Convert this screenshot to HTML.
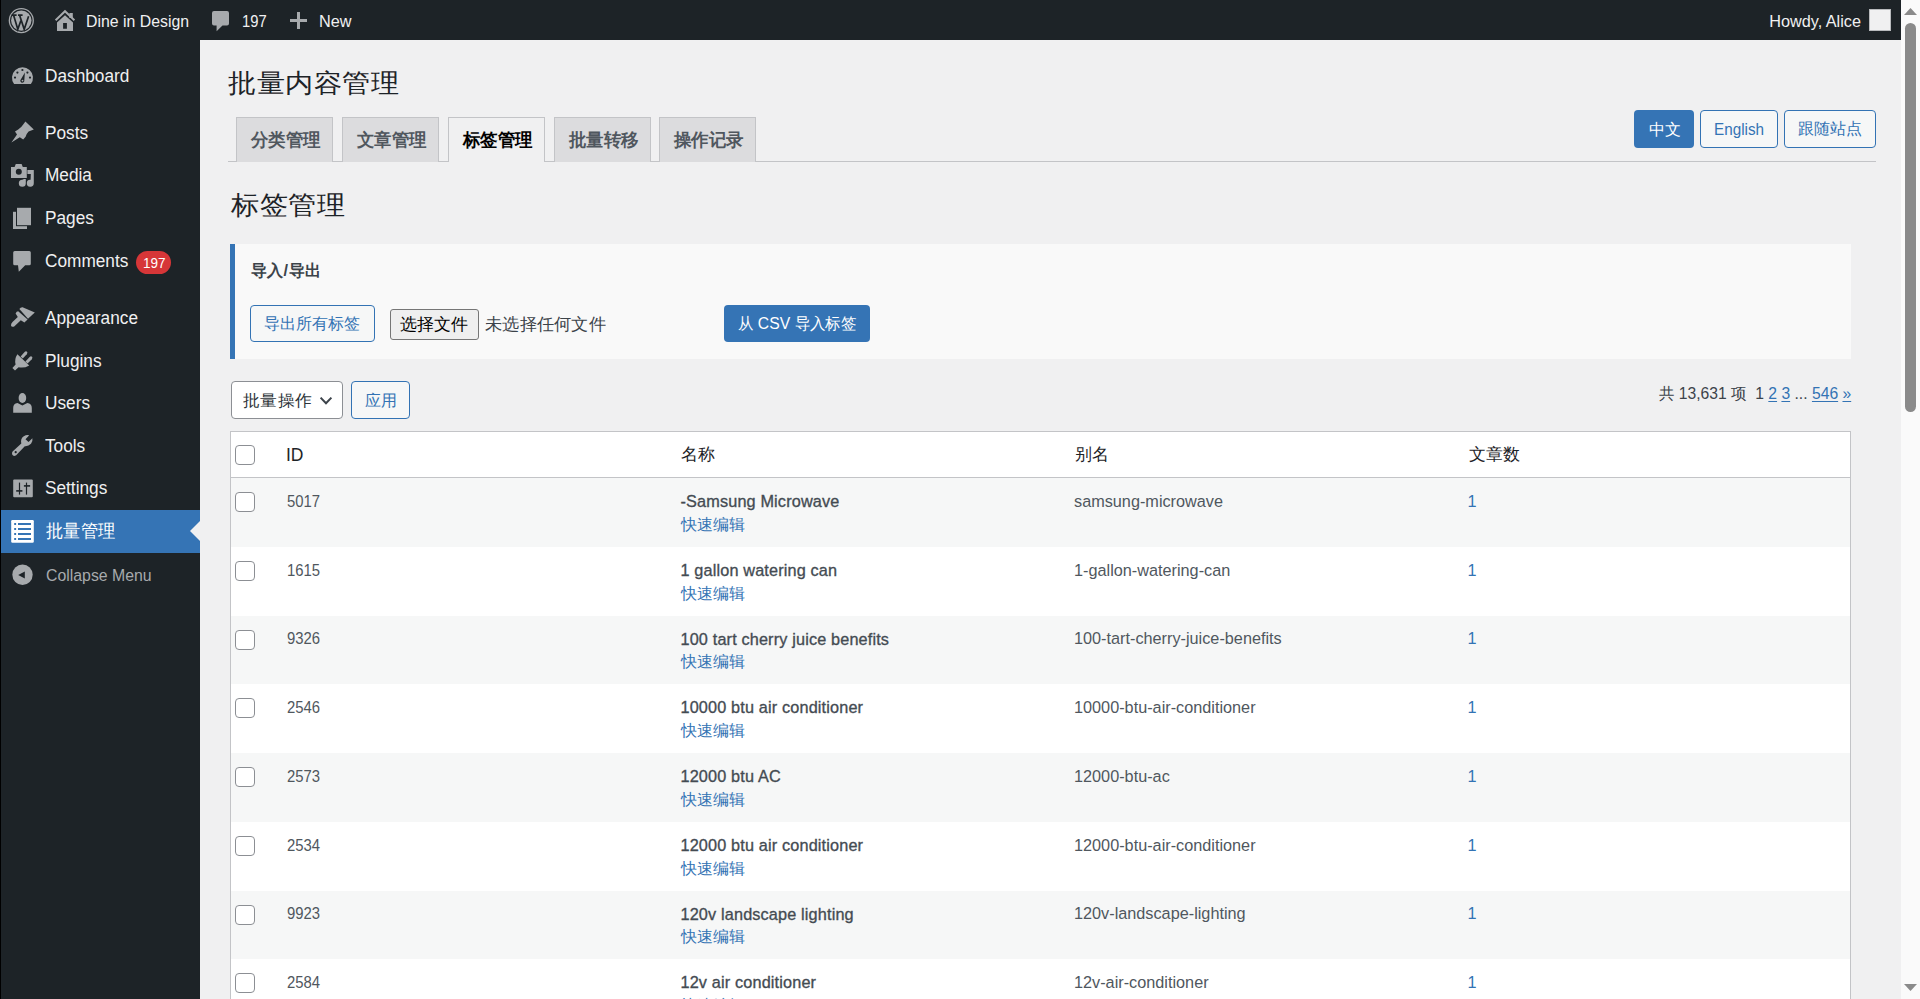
<!DOCTYPE html>
<html><head><meta charset="utf-8"><title>批量内容管理</title>
<style>
html,body{margin:0;padding:0;}
body{width:1920px;height:999px;overflow:hidden;position:relative;background:#f0f0f1;font-family:"Liberation Sans",sans-serif;}
.t{position:absolute;white-space:nowrap;}
.r{position:absolute;box-sizing:border-box;}
svg{position:absolute;overflow:visible;}
u{text-decoration:underline;text-underline-offset:2px;}
</style></head><body>
<div class="r" style="left:0px;top:0px;width:1901px;height:40px;background:#1d2327;"></div>
<div class="r" style="left:0px;top:40px;width:200px;height:959px;background:#1d2327;"></div>
<div class="r" style="left:0px;top:0px;width:1px;height:999px;background:#000;"></div>
<svg style="left:0;top:0" width="40" height="40">
<circle cx="21.3" cy="20.6" r="12.6" fill="#a7aaad"/>
<circle cx="21.3" cy="20.6" r="11.3" fill="#1d2327"/>
<circle cx="21.3" cy="20.6" r="10.2" fill="#a7aaad"/>
<g stroke="#1d2327" stroke-width="1.7" fill="none" stroke-linecap="butt">
<path d="M13.6 15.2 L17.8 29.2 L20.9 20.6"/>
<path d="M19.6 15.2 L24.2 29.2 L28.6 16.2"/>
<path d="M11.8 15.2 L16.6 15.2 M18 15.2 L22.6 15.2"/>
</g>
</svg>
<svg style="left:0;top:0" width="300" height="40"><g fill="#a7aaad">
<path d="M55.6 20.2 L65 11.2 L74.4 20.2" fill="none" stroke="#a7aaad" stroke-width="2"/>
<path d="M57 22.6 L65 15.2 L73 22.6 L73 31 L57 31 Z M63.1 23.1 L63.1 28.8 L66.9 28.8 L66.9 23.1 Z" fill-rule="evenodd"/>
<rect x="69.4" y="13" width="3.4" height="5"/>
<path d="M214 11 L227 11 Q229 11 229 13 L229 23.5 Q229 25.5 227 25.5 L222.5 25.5 L216.6 31.3 L216.6 25.5 L214 25.5 Q212 25.5 212 23.5 L212 13 Q212 11 214 11 Z"/>
</g></svg>
<div class="t " style="left:86px;top:10.81px;font-size:16.25px;line-height:21.12px;color:#f0f0f1;font-weight:400;transform:scale(0.975,1);transform-origin:left center;">Dine in Design</div>
<div class="t " style="left:242px;top:10.81px;font-size:16.25px;line-height:21.12px;color:#f0f0f1;font-weight:400;transform:scale(0.91,1);transform-origin:left center;">197</div>
<div class="r" style="left:297px;top:12px;width:3px;height:17px;background:#a7aaad;"></div>
<div class="r" style="left:290px;top:19px;width:17px;height:3px;background:#a7aaad;"></div>
<div class="t " style="left:319px;top:10.81px;font-size:16.25px;line-height:21.12px;color:#f0f0f1;font-weight:400;">New</div>
<div class="t " style="right:59px;top:10.81px;font-size:16.25px;line-height:21.12px;color:#f0f0f1;font-weight:400;">Howdy, Alice</div>
<div class="r" style="left:1869px;top:9px;width:22px;height:22px;background:#f0f0f1;border:1px solid #b8babd;"></div>
<div class="r" style="left:1901px;top:0px;width:19px;height:999px;background:#fafafa;"></div>
<div class="r" style="left:1905px;top:23px;width:11px;height:389px;background:#8a8a8a;border-radius:5.5px;"></div>
<svg style="left:1901px;top:0" width="19" height="999"><path fill="#8a8a8a" d="M3 15 L16 15 L9.5 8 Z"/><path fill="#8a8a8a" d="M3 984 L16 984 L9.5 991 Z"/></svg>
<div class="t " style="left:45px;top:65.26px;font-size:17.5px;line-height:22.75px;color:#f0f0f1;font-weight:400;transform:scale(0.985,1);transform-origin:left center;">Dashboard</div>
<div class="t " style="left:45px;top:121.76px;font-size:17.5px;line-height:22.75px;color:#f0f0f1;font-weight:400;transform:scale(0.985,1);transform-origin:left center;">Posts</div>
<div class="t " style="left:45px;top:164.26px;font-size:17.5px;line-height:22.75px;color:#f0f0f1;font-weight:400;transform:scale(0.985,1);transform-origin:left center;">Media</div>
<div class="t " style="left:45px;top:207.36px;font-size:17.5px;line-height:22.75px;color:#f0f0f1;font-weight:400;transform:scale(0.985,1);transform-origin:left center;">Pages</div>
<div class="t " style="left:45px;top:250.16px;font-size:17.5px;line-height:22.75px;color:#f0f0f1;font-weight:400;transform:scale(0.985,1);transform-origin:left center;">Comments</div>
<div class="t " style="left:45px;top:307.26px;font-size:17.5px;line-height:22.75px;color:#f0f0f1;font-weight:400;transform:scale(0.985,1);transform-origin:left center;">Appearance</div>
<div class="t " style="left:45px;top:349.76px;font-size:17.5px;line-height:22.75px;color:#f0f0f1;font-weight:400;transform:scale(0.985,1);transform-origin:left center;">Plugins</div>
<div class="t " style="left:45px;top:392.26px;font-size:17.5px;line-height:22.75px;color:#f0f0f1;font-weight:400;transform:scale(0.985,1);transform-origin:left center;">Users</div>
<div class="t " style="left:45px;top:434.76px;font-size:17.5px;line-height:22.75px;color:#f0f0f1;font-weight:400;transform:scale(0.985,1);transform-origin:left center;">Tools</div>
<div class="t " style="left:45px;top:477.26px;font-size:17.5px;line-height:22.75px;color:#f0f0f1;font-weight:400;transform:scale(0.985,1);transform-origin:left center;">Settings</div>
<div class="r" style="left:1px;top:510px;width:199px;height:43px;background:#3574b5;"></div>
<svg style="left:190px;top:521px" width="10" height="20"><path fill="#f0f0f1" d="M10 0 L0 10 L10 20 Z"/></svg>
<div class="t " style="left:45.5px;top:519.86px;font-size:17.5px;line-height:22.75px;color:#fff;font-weight:400;transform:scale(0.96,1);transform-origin:left center;">批量管理</div>
<div class="t " style="left:45.5px;top:564.71px;font-size:16.25px;line-height:21.12px;color:#a7aaad;font-weight:400;transform:scale(0.975,1);transform-origin:left center;">Collapse Menu</div>
<div class="r" style="left:136px;top:251px;width:35px;height:23px;background:#d63638;border-radius:11.5px;"></div>
<div class="t " style="left:143.4px;top:252.65px;font-size:15px;line-height:19.5px;color:#fff;font-weight:400;transform:scale(0.9,1);transform-origin:left center;">197</div>
<svg style="left:0;top:0" width="200" height="600">
<g fill="#a7aaad">
<!-- dashboard -->
<path d="M14.1 84 A10.5 10.5 0 1 1 30.9 84 Z"/>
</g>
<g fill="#1d2327">
<circle cx="22.4" cy="70" r="1.1"/><circle cx="17.4" cy="72.6" r="1.1"/><circle cx="27.4" cy="72.6" r="1.1"/>
<circle cx="15" cy="77.6" r="1.1"/><circle cx="30" cy="77.6" r="1.1"/>
<path d="M24.9 72.6 L24.3 80.6 A2 2 0 1 1 20.8 79.5 Z"/>
</g>
<g fill="#a7aaad"><circle cx="22.5" cy="80.6" r="0.9"/></g>
<g fill="#a7aaad">
<!-- posts pin -->
<path d="M11.4 142.6 L17 134.6 L15 131.4 L18.2 129.4 Q21.5 127.5 23.2 124.6 L25.4 121.4 L33.8 129.4 L28.6 131.4 Q26.5 133.5 25.6 136.8 L23.2 139.6 L19.8 137.2 Z"/>
<!-- media -->
<path d="M11 167 L14.6 167 L15.8 164 L21.6 164 L22.8 167 L26.8 167 L26.8 178 L11 178 Z M18.8 168.8 A3 3 0 1 0 18.8 174.8 A3 3 0 1 0 18.8 168.8 Z" fill-rule="evenodd"/>
<path d="M27.4 170 L33.8 170 L33.8 183.2 A3.5 3.5 0 1 1 30.6 179.7 L30.8 174 L27.4 174 Z"/>
<path d="M24 179 L25.8 179 L25.8 183.2 A3.5 3.5 0 1 1 22.3 179.7 Z"/>
<!-- pages -->
<rect x="13" y="211.8" width="14" height="17.2"/>
<rect x="16" y="206.8" width="16" height="19.4" fill="#1d2327"/>
<rect x="17" y="207.8" width="14" height="17.4"/>
<!-- comments -->
<path d="M14.7 251 L29.3 251 Q30.8 251 30.8 252.5 L30.8 263.7 Q30.8 265.2 29.3 265.2 L25.2 265.2 L18.8 271.8 L18 265.2 L14.7 265.2 Q13.2 265.2 13.2 263.7 L13.2 252.5 Q13.2 251 14.7 251 Z"/>
<!-- appearance brush -->
<path d="M19.4 309 Q20.5 307 22.6 307.2 L34.8 312.4 L28 318.8 Z"/>
<path d="M15.6 313.4 Q16.5 311.3 18.2 311.2 L27.6 319.4 L24.4 322.6 L20.8 320.2 L14.2 326.5 Q11.5 327.5 11 325.5 Q10.8 323.5 12.5 322 L17.8 317 Z"/>
<!-- plugins -->
<path d="M17.4 354.2 L29.2 365.4 Q24 368.5 18.6 367.2 L15 370.5 L12.4 368 L15.6 364.4 Q14.2 359 17.4 354.2 Z"/>
<path d="M20.6 356.4 L24.6 352 Q26 350.8 27 351.8 Q28 352.8 26.8 354.2 L22.8 358.4 Z"/>
<path d="M25.4 361.4 L29.6 357 Q31 355.8 32 356.8 Q33 357.8 31.8 359.2 L27.6 363.6 Z"/>
<!-- users -->
<ellipse cx="22.4" cy="398" rx="3.8" ry="5"/>
<path d="M13.2 412.8 L13.2 408 Q13.2 403.5 17.5 403 L22.4 405.6 L27.3 403 Q31.8 403.5 31.8 408 L31.8 412.8 Z"/>
<!-- tools wrench -->
<path d="M12.6 451.5 L21.3 443.5 Q20.2 438.5 23.8 436.2 Q26.5 434.5 29.2 435.2 L25.5 439.2 L28.5 442 L32.4 438.2 Q33 441.5 31 443.8 Q28.5 446.5 24.8 446.2 L16.2 455.2 Q13.5 456.8 12.3 454.8 Q11.5 453 12.6 451.5 Z M15.7 451.1 A1.1 1.1 0 1 0 15.7 453.3 A1.1 1.1 0 1 0 15.7 451.1 Z" fill-rule="evenodd"/>
<!-- settings -->
<rect x="13.2" y="479.6" width="19.6" height="17.6" rx="1"/>
<!-- collapse -->
<circle cx="22.5" cy="574.8" r="10.2"/>
</g>
<g fill="#1d2327">
<rect x="18.9" y="482.6" width="1.2" height="12"/>
<rect x="16.2" y="490.1" width="6.2" height="1.6"/>
<rect x="25.9" y="482.6" width="1.2" height="12"/>
<rect x="23.9" y="485.1" width="6.2" height="1.6"/>
<path d="M18.2 575 L24.8 571.4 L24.8 578.6 Z"/>
</g>
<g>
<rect x="11.2" y="520" width="22.6" height="22.8" rx="1.2" fill="#fff"/>
<g fill="#3574b5">
<rect x="14.2" y="523" width="1.9" height="2"/><rect x="18" y="523" width="13" height="2"/>
<rect x="14.2" y="528" width="1.9" height="2"/><rect x="18" y="528" width="13" height="2"/>
<rect x="14.2" y="533" width="1.9" height="2"/><rect x="18" y="533" width="13" height="2"/>
<rect x="14.2" y="538" width="1.9" height="2"/><rect x="18" y="538" width="13" height="2"/>
</g></g>
</svg>
<div class="t " style="left:228px;top:64.94px;font-size:28.75px;line-height:37.38px;color:#1d2327;font-weight:400;transform:scale(0.985,0.91);transform-origin:left center;">批量内容管理</div>
<div class="r" style="left:228px;top:161px;width:1648px;height:1px;background:#c3c4c7;"></div>
<div class="r" style="left:236px;top:117px;width:97px;height:45px;background:#dcdcde;border:1px solid #c3c4c7;border-bottom:none;"></div>
<div class="t " style="left:250.5px;top:129.06px;font-size:17.5px;line-height:22.75px;color:#50575e;font-weight:600;transform:scale(0.97,1);transform-origin:left center;">分类管理</div>
<div class="r" style="left:342px;top:117px;width:97px;height:45px;background:#dcdcde;border:1px solid #c3c4c7;border-bottom:none;"></div>
<div class="t " style="left:356.5px;top:129.06px;font-size:17.5px;line-height:22.75px;color:#50575e;font-weight:600;transform:scale(0.97,1);transform-origin:left center;">文章管理</div>
<div class="r" style="left:448px;top:117px;width:97px;height:45px;background:#f0f0f1;border:1px solid #c3c4c7;border-bottom:none;"></div>
<div class="t " style="left:462.5px;top:129.06px;font-size:17.5px;line-height:22.75px;color:#000;font-weight:600;transform:scale(0.97,1);transform-origin:left center;">标签管理</div>
<div class="r" style="left:554px;top:117px;width:97px;height:45px;background:#dcdcde;border:1px solid #c3c4c7;border-bottom:none;"></div>
<div class="t " style="left:568.5px;top:129.06px;font-size:17.5px;line-height:22.75px;color:#50575e;font-weight:600;transform:scale(0.97,1);transform-origin:left center;">批量转移</div>
<div class="r" style="left:659px;top:117px;width:97px;height:45px;background:#dcdcde;border:1px solid #c3c4c7;border-bottom:none;"></div>
<div class="t " style="left:673.5px;top:129.06px;font-size:17.5px;line-height:22.75px;color:#50575e;font-weight:600;transform:scale(0.97,1);transform-origin:left center;">操作记录</div>
<div class="r" style="left:449px;top:161px;width:95px;height:1px;background:#f0f0f1;"></div>
<div class="r" style="left:1634px;top:110px;width:60px;height:38px;background:#3574b5;border-radius:4px;"></div>
<div class="t " style="left:1648.5px;top:118.81px;font-size:16.25px;line-height:21.12px;color:#fff;font-weight:400;">中文</div>
<div class="r" style="left:1700px;top:110px;width:78px;height:38px;background:#f6f7f7;border:1px solid #3373b4;border-radius:4px;"></div>
<div class="t " style="left:1713.5px;top:119.31px;font-size:16.25px;line-height:21.12px;color:#3373b4;font-weight:400;transform:scale(0.94,1);transform-origin:left center;">English</div>
<div class="r" style="left:1784px;top:110px;width:92px;height:38px;background:#f6f7f7;border:1px solid #3373b4;border-radius:4px;"></div>
<div class="t " style="left:1797.5px;top:118.41px;font-size:16.25px;line-height:21.12px;color:#3373b4;font-weight:400;">跟随站点</div>
<div class="t " style="left:230.5px;top:186.50px;font-size:29px;line-height:37.7px;color:#1d2327;font-weight:400;transform:scale(0.985,0.91);transform-origin:left center;">标签管理</div>
<div class="r" style="left:230px;top:244px;width:1621px;height:115px;background:#f9f9f9;"></div>
<div class="r" style="left:230px;top:244px;width:5px;height:115px;background:#3574b5;"></div>
<div class="t " style="left:250.5px;top:259.81px;font-size:16.25px;line-height:21.12px;color:#3c434a;font-weight:700;letter-spacing:0.5px;">导入/导出</div>
<div class="r" style="left:250px;top:305px;width:125px;height:37px;background:#f6f7f7;border:1px solid #3373b4;border-radius:4px;"></div>
<div class="t " style="left:264px;top:312.81px;font-size:16.25px;line-height:21.12px;color:#3373b4;font-weight:400;">导出所有标签</div>
<div class="r" style="left:390px;top:309px;width:89px;height:31px;background:#efefef;border:1px solid #767676;border-radius:3px;"></div>
<div class="t " style="left:400px;top:314.06px;font-size:17px;line-height:22.1px;color:#000;font-weight:400;">选择文件</div>
<div class="t " style="left:485px;top:314.06px;font-size:17px;line-height:22.1px;color:#3c434a;font-weight:400;transform:scale(1.015,1);transform-origin:left center;">未选择任何文件</div>
<div class="r" style="left:724px;top:305px;width:146px;height:37px;background:#3574b5;border-radius:4px;"></div>
<div class="t " style="left:738px;top:312.81px;font-size:16.25px;line-height:21.12px;color:#fff;font-weight:400;transform:scale(0.967,1);transform-origin:left center;">从 CSV 导入标签</div>
<div class="r" style="left:231px;top:381px;width:112px;height:38px;background:#fff;border:1px solid #8c8f94;border-radius:4px;"></div>
<div class="t " style="left:242.5px;top:389.06px;font-size:17.5px;line-height:22.75px;color:#2c3338;font-weight:400;transform:scale(0.965,0.92);transform-origin:left center;">批量操作</div>
<svg style="left:318px;top:395px" width="16" height="12"><path d="M2.6 2.6 L8 8.2 L13.4 2.6" fill="none" stroke="#3c434a" stroke-width="2"/></svg>
<div class="r" style="left:351px;top:381px;width:59px;height:38px;background:#f6f7f7;border:1px solid #3373b4;border-radius:4px;"></div>
<div class="t " style="left:365px;top:389.81px;font-size:16.25px;line-height:21.12px;color:#3373b4;font-weight:400;">应用</div>
<div class="t " style="right:69px;top:382.81px;font-size:16.25px;line-height:21.12px;color:#3c434a;font-weight:400;transform:scale(0.965,1);transform-origin:right center;">共 13,631 项 &nbsp;1 <u style="color:#3373b4">2</u> <u style="color:#3373b4">3</u> ... <u style="color:#3373b4">546</u> <u style="color:#3373b4">»</u></div>
<div class="r" style="left:230px;top:431px;width:1621px;height:600px;background:#fff;border:1px solid #c3c4c7;"></div>
<div class="r" style="left:231px;top:477px;width:1619px;height:1px;background:#c3c4c7;"></div>
<div class="r" style="left:235px;top:445px;width:20px;height:20px;background:#fff;border:1px solid #8c8f94;border-radius:4px;"></div>
<div class="t " style="left:286px;top:443.56px;font-size:17.5px;line-height:22.75px;color:#1d2327;font-weight:400;">ID</div>
<div class="t " style="left:681px;top:443.55px;font-size:16.5px;line-height:21.45px;color:#1d2327;font-weight:400;">名称</div>
<div class="t " style="left:1074.5px;top:443.55px;font-size:16.5px;line-height:21.45px;color:#1d2327;font-weight:400;">别名</div>
<div class="t " style="left:1468.5px;top:443.55px;font-size:16.5px;line-height:21.45px;color:#1d2327;font-weight:400;">文章数</div>
<div class="r" style="left:231px;top:478.0px;width:1619px;height:68.75px;background:#f6f7f7;"></div>
<div class="r" style="left:235px;top:492.0px;width:20px;height:20px;background:#fff;border:1px solid #8c8f94;border-radius:4px;"></div>
<div class="t " style="left:286.5px;top:490.81px;font-size:16.25px;line-height:21.12px;color:#50575e;font-weight:400;transform:scale(0.915,1);transform-origin:left center;">5017</div>
<div class="t " style="left:680.5px;top:491.21px;font-size:16.25px;line-height:21.12px;color:#444b52;font-weight:400;-webkit-text-stroke:0.32px #444b52;letter-spacing:0.15px;">-Samsung Microwave</div>
<div class="t " style="left:681px;top:513.81px;font-size:16.25px;line-height:21.12px;color:#3373b4;font-weight:400;">快速编辑</div>
<div class="t " style="left:1074px;top:490.81px;font-size:16.25px;line-height:21.12px;color:#50575e;font-weight:400;">samsung-microwave</div>
<div class="t " style="left:1467.5px;top:490.81px;font-size:16.25px;line-height:21.12px;color:#3373b4;font-weight:400;">1</div>
<div class="r" style="left:235px;top:560.75px;width:20px;height:20px;background:#fff;border:1px solid #8c8f94;border-radius:4px;"></div>
<div class="t " style="left:286.5px;top:559.56px;font-size:16.25px;line-height:21.12px;color:#50575e;font-weight:400;transform:scale(0.915,1);transform-origin:left center;">1615</div>
<div class="t " style="left:680.5px;top:559.96px;font-size:16.25px;line-height:21.12px;color:#444b52;font-weight:400;-webkit-text-stroke:0.32px #444b52;letter-spacing:0.15px;">1 gallon watering can</div>
<div class="t " style="left:681px;top:582.56px;font-size:16.25px;line-height:21.12px;color:#3373b4;font-weight:400;">快速编辑</div>
<div class="t " style="left:1074px;top:559.56px;font-size:16.25px;line-height:21.12px;color:#50575e;font-weight:400;">1-gallon-watering-can</div>
<div class="t " style="left:1467.5px;top:559.56px;font-size:16.25px;line-height:21.12px;color:#3373b4;font-weight:400;">1</div>
<div class="r" style="left:231px;top:615.5px;width:1619px;height:68.75px;background:#f6f7f7;"></div>
<div class="r" style="left:235px;top:629.5px;width:20px;height:20px;background:#fff;border:1px solid #8c8f94;border-radius:4px;"></div>
<div class="t " style="left:286.5px;top:628.31px;font-size:16.25px;line-height:21.12px;color:#50575e;font-weight:400;transform:scale(0.915,1);transform-origin:left center;">9326</div>
<div class="t " style="left:680.5px;top:628.71px;font-size:16.25px;line-height:21.12px;color:#444b52;font-weight:400;-webkit-text-stroke:0.32px #444b52;letter-spacing:0.15px;">100 tart cherry juice benefits</div>
<div class="t " style="left:681px;top:651.31px;font-size:16.25px;line-height:21.12px;color:#3373b4;font-weight:400;">快速编辑</div>
<div class="t " style="left:1074px;top:628.31px;font-size:16.25px;line-height:21.12px;color:#50575e;font-weight:400;">100-tart-cherry-juice-benefits</div>
<div class="t " style="left:1467.5px;top:628.31px;font-size:16.25px;line-height:21.12px;color:#3373b4;font-weight:400;">1</div>
<div class="r" style="left:235px;top:698.25px;width:20px;height:20px;background:#fff;border:1px solid #8c8f94;border-radius:4px;"></div>
<div class="t " style="left:286.5px;top:697.06px;font-size:16.25px;line-height:21.12px;color:#50575e;font-weight:400;transform:scale(0.915,1);transform-origin:left center;">2546</div>
<div class="t " style="left:680.5px;top:697.46px;font-size:16.25px;line-height:21.12px;color:#444b52;font-weight:400;-webkit-text-stroke:0.32px #444b52;letter-spacing:0.15px;">10000 btu air conditioner</div>
<div class="t " style="left:681px;top:720.06px;font-size:16.25px;line-height:21.12px;color:#3373b4;font-weight:400;">快速编辑</div>
<div class="t " style="left:1074px;top:697.06px;font-size:16.25px;line-height:21.12px;color:#50575e;font-weight:400;">10000-btu-air-conditioner</div>
<div class="t " style="left:1467.5px;top:697.06px;font-size:16.25px;line-height:21.12px;color:#3373b4;font-weight:400;">1</div>
<div class="r" style="left:231px;top:753.0px;width:1619px;height:68.75px;background:#f6f7f7;"></div>
<div class="r" style="left:235px;top:767.0px;width:20px;height:20px;background:#fff;border:1px solid #8c8f94;border-radius:4px;"></div>
<div class="t " style="left:286.5px;top:765.81px;font-size:16.25px;line-height:21.12px;color:#50575e;font-weight:400;transform:scale(0.915,1);transform-origin:left center;">2573</div>
<div class="t " style="left:680.5px;top:766.21px;font-size:16.25px;line-height:21.12px;color:#444b52;font-weight:400;-webkit-text-stroke:0.32px #444b52;letter-spacing:0.15px;">12000 btu AC</div>
<div class="t " style="left:681px;top:788.81px;font-size:16.25px;line-height:21.12px;color:#3373b4;font-weight:400;">快速编辑</div>
<div class="t " style="left:1074px;top:765.81px;font-size:16.25px;line-height:21.12px;color:#50575e;font-weight:400;">12000-btu-ac</div>
<div class="t " style="left:1467.5px;top:765.81px;font-size:16.25px;line-height:21.12px;color:#3373b4;font-weight:400;">1</div>
<div class="r" style="left:235px;top:835.75px;width:20px;height:20px;background:#fff;border:1px solid #8c8f94;border-radius:4px;"></div>
<div class="t " style="left:286.5px;top:834.56px;font-size:16.25px;line-height:21.12px;color:#50575e;font-weight:400;transform:scale(0.915,1);transform-origin:left center;">2534</div>
<div class="t " style="left:680.5px;top:834.96px;font-size:16.25px;line-height:21.12px;color:#444b52;font-weight:400;-webkit-text-stroke:0.32px #444b52;letter-spacing:0.15px;">12000 btu air conditioner</div>
<div class="t " style="left:681px;top:857.56px;font-size:16.25px;line-height:21.12px;color:#3373b4;font-weight:400;">快速编辑</div>
<div class="t " style="left:1074px;top:834.56px;font-size:16.25px;line-height:21.12px;color:#50575e;font-weight:400;">12000-btu-air-conditioner</div>
<div class="t " style="left:1467.5px;top:834.56px;font-size:16.25px;line-height:21.12px;color:#3373b4;font-weight:400;">1</div>
<div class="r" style="left:231px;top:890.5px;width:1619px;height:68.75px;background:#f6f7f7;"></div>
<div class="r" style="left:235px;top:904.5px;width:20px;height:20px;background:#fff;border:1px solid #8c8f94;border-radius:4px;"></div>
<div class="t " style="left:286.5px;top:903.31px;font-size:16.25px;line-height:21.12px;color:#50575e;font-weight:400;transform:scale(0.915,1);transform-origin:left center;">9923</div>
<div class="t " style="left:680.5px;top:903.71px;font-size:16.25px;line-height:21.12px;color:#444b52;font-weight:400;-webkit-text-stroke:0.32px #444b52;letter-spacing:0.15px;">120v landscape lighting</div>
<div class="t " style="left:681px;top:926.31px;font-size:16.25px;line-height:21.12px;color:#3373b4;font-weight:400;">快速编辑</div>
<div class="t " style="left:1074px;top:903.31px;font-size:16.25px;line-height:21.12px;color:#50575e;font-weight:400;">120v-landscape-lighting</div>
<div class="t " style="left:1467.5px;top:903.31px;font-size:16.25px;line-height:21.12px;color:#3373b4;font-weight:400;">1</div>
<div class="r" style="left:235px;top:973.25px;width:20px;height:20px;background:#fff;border:1px solid #8c8f94;border-radius:4px;"></div>
<div class="t " style="left:286.5px;top:972.06px;font-size:16.25px;line-height:21.12px;color:#50575e;font-weight:400;transform:scale(0.915,1);transform-origin:left center;">2584</div>
<div class="t " style="left:680.5px;top:972.46px;font-size:16.25px;line-height:21.12px;color:#444b52;font-weight:400;-webkit-text-stroke:0.32px #444b52;letter-spacing:0.15px;">12v air conditioner</div>
<div class="t " style="left:681px;top:995.06px;font-size:16.25px;line-height:21.12px;color:#3373b4;font-weight:400;">快速编辑</div>
<div class="t " style="left:1074px;top:972.06px;font-size:16.25px;line-height:21.12px;color:#50575e;font-weight:400;">12v-air-conditioner</div>
<div class="t " style="left:1467.5px;top:972.06px;font-size:16.25px;line-height:21.12px;color:#3373b4;font-weight:400;">1</div>
</body></html>
